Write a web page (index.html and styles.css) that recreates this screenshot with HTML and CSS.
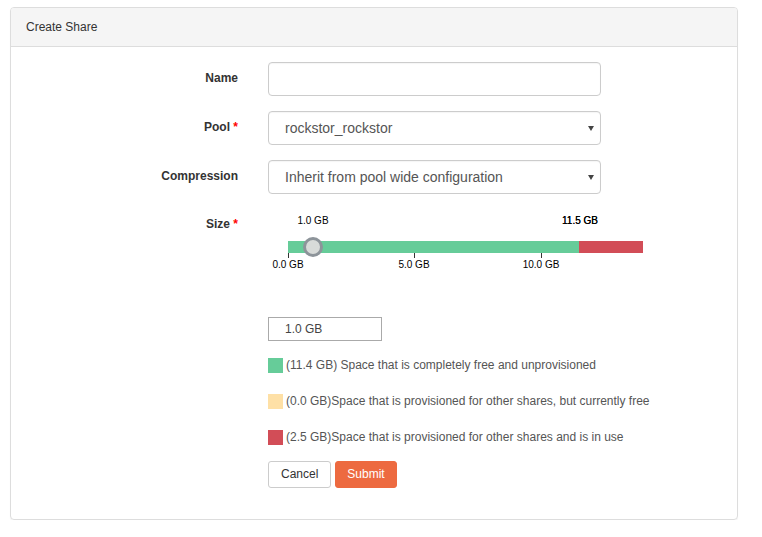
FILE: index.html
```html
<!DOCTYPE html>
<html lang="en">

<head>
    <meta charset="UTF-8">
    <meta name="viewport" content="width=device-width, initial-scale=1.0">
    <title>Create Share</title>
    <link rel="stylesheet" href="styles.css">
</head>

<body>
    <div class="page">
        <div class="panel">
            <div class="panel-heading">Create Share</div>
            <form class="panel-body">
                <div class="form-row">
                    <label class="control-label">Name</label>
                    <div class="field">
                        <input type="text" class="form-control">
                    </div>
                </div>
                <div class="form-row">
                    <label class="control-label">Pool <span class="required">*</span></label>
                    <div class="field select-wrap">
                        <select class="form-control">
                            <option>rockstor_rockstor</option>
                        </select>
                        <span class="caret"></span>
                    </div>
                </div>
                <div class="form-row">
                    <label class="control-label">Compression</label>
                    <div class="field select-wrap">
                        <select class="form-control">
                            <option>Inherit from pool wide configuration</option>
                        </select>
                        <span class="caret"></span>
                    </div>
                </div>
                <div class="form-row">
                    <label class="control-label size-label">Size <span class="required">*</span></label>
                    <div class="field">
                        <!-- range slider, 1 GB = 25.3px -->
                        <div class="slider">
                            <span class="slider-value" style="left: 45px">1.0 GB</span>
                            <span class="slider-value slider-max" style="left: 312px">11.5 GB</span>
                            <div class="slider-bar">
                                <div class="bar-free" style="width: 291px"></div>
                                <div class="bar-used"></div>
                            </div>
                            <span class="slider-handle" style="left: 35px"></span>
                            <span class="tick" style="left: 20px"></span>
                            <span class="tick" style="left: 146px"></span>
                            <span class="tick" style="left: 273px"></span>
                            <span class="tick-label" style="left: 20px">0.0 GB</span>
                            <span class="tick-label" style="left: 146px">5.0 GB</span>
                            <span class="tick-label" style="left: 273px">10.0 GB</span>
                        </div>
                        <input type="text" class="size-input" value="1.0 GB">
                        <ul class="legend">
                            <li><span class="swatch free"></span>(11.4 GB) Space that is completely free and unprovisioned</li>
                            <li><span class="swatch reserved"></span>(0.0 GB)Space that is provisioned for other shares, but currently free</li>
                            <li><span class="swatch used"></span>(2.5 GB)Space that is provisioned for other shares and is in use</li>
                        </ul>
                        <div class="actions">
                            <button type="button" class="btn btn-default">Cancel</button>
                            <button type="button" class="btn btn-primary">Submit</button>
                        </div>
                    </div>
                </div>
            </form>
        </div>
    </div>
</body>

</html>
```

FILE: styles.css
```css
* {
    margin: 0;
    padding: 0;
    box-sizing: border-box;
    list-style: none;
}

body {
    font-family: "Liberation Sans", Arial, sans-serif;
    font-size: 12px;
    color: #333;
    background-color: #fff;
}

.page {
    padding: 7px 0 0 10px;
}

.panel {
    width: 728px;
    border: 1px solid #ddd;
    border-radius: 4px;
    box-shadow: 0 1px 1px rgba(0, 0, 0, 0.06);
}

.panel-heading {
    height: 39px;
    padding: 0 15px;
    line-height: 38px;
    font-size: 12px;
    color: #333;
    background-color: #f5f5f5;
    border-bottom: 1px solid #ddd;
    border-radius: 3px 3px 0 0;
}

.panel-body {
    padding: 15px 0 31px;
}

.form-row {
    display: flex;
    margin-bottom: 15px;
}

.form-row:last-child {
    margin-bottom: 0;
}

.control-label {
    width: 227px;
    padding-top: 7px;
    line-height: 18px;
    text-align: right;
    font-weight: bold;
    color: #333;
}

.size-label {
    padding-top: 6px;
}

.required {
    color: #f00;
}

.field {
    margin-left: 30px;
}

.form-control {
    display: block;
    width: 333px;
    height: 34px;
    padding: 0 16px;
    font-family: inherit;
    font-size: 14px;
    color: #555;
    background-color: #fff;
    border: 1px solid #ccc;
    border-radius: 4px;
    box-shadow: inset 0 1px 1px rgba(0, 0, 0, 0.04);
    appearance: none;
    -webkit-appearance: none;
    outline: none;
}

.select-wrap {
    position: relative;
}

.caret {
    position: absolute;
    right: 7px;
    top: 15px;
    width: 0;
    height: 0;
    border-left: 3px solid transparent;
    border-right: 3px solid transparent;
    border-top: 5px solid #444;
}

/* slider */
.slider {
    position: relative;
    width: 380px;
    height: 108px;
}

.slider-value {
    position: absolute;
    top: 6px;
    transform: translateX(-50%);
    font-size: 10px;
    line-height: 12px;
    color: #000;
    white-space: nowrap;
}

.slider-max {
    text-shadow: 0 0 0.2px #000;
}

.slider-bar {
    position: absolute;
    left: 20px;
    top: 32px;
    width: 355px;
    height: 12px;
    display: flex;
}

.bar-free {
    height: 100%;
    background-color: #66cc99;
}

.bar-used {
    flex: 1;
    height: 100%;
    background-color: #d24d57;
}

.slider-handle {
    position: absolute;
    top: 28px;
    width: 20px;
    height: 20px;
    border-radius: 50%;
    border: 3px solid #8d949a;
    background-color: #d8dbd9;
}

.tick {
    position: absolute;
    top: 44px;
    width: 1px;
    height: 5px;
    background-color: #333;
}

.tick-label {
    position: absolute;
    top: 50px;
    transform: translateX(-50%);
    font-size: 10px;
    line-height: 12px;
    color: #000;
    white-space: nowrap;
}

.size-input {
    display: block;
    width: 114px;
    height: 24px;
    padding: 0 16px;
    font-family: inherit;
    font-size: 12px;
    color: #444;
    border: 1px solid #aaa;
    outline: none;
}

.legend {
    margin-top: 14px;
    color: #555;
}

.legend li {
    display: flex;
    align-items: center;
    height: 20px;
    margin-bottom: 16px;
    line-height: 20px;
}

.legend li:last-child {
    margin-bottom: 0;
}

.swatch {
    display: inline-block;
    width: 15px;
    height: 15px;
    margin-right: 3px;
}

.swatch.free {
    background-color: #66cc99;
}

.swatch.reserved {
    background-color: #fee0a6;
}

.swatch.used {
    background-color: #d24d57;
}

.actions {
    display: flex;
    gap: 4px;
    margin-top: 14px;
}

.btn {
    height: 27px;
    padding: 0 12px;
    font-family: inherit;
    font-size: 12px;
    line-height: 25px;
    border: 1px solid transparent;
    border-radius: 3px;
    cursor: pointer;
}

.btn-default {
    color: #333;
    background-color: #fff;
    border-color: #ccc;
}

.btn-primary {
    padding: 0 11px;
    color: #fff;
    background-color: #ed6a40;
    border-color: #ed6a40;
}
```
